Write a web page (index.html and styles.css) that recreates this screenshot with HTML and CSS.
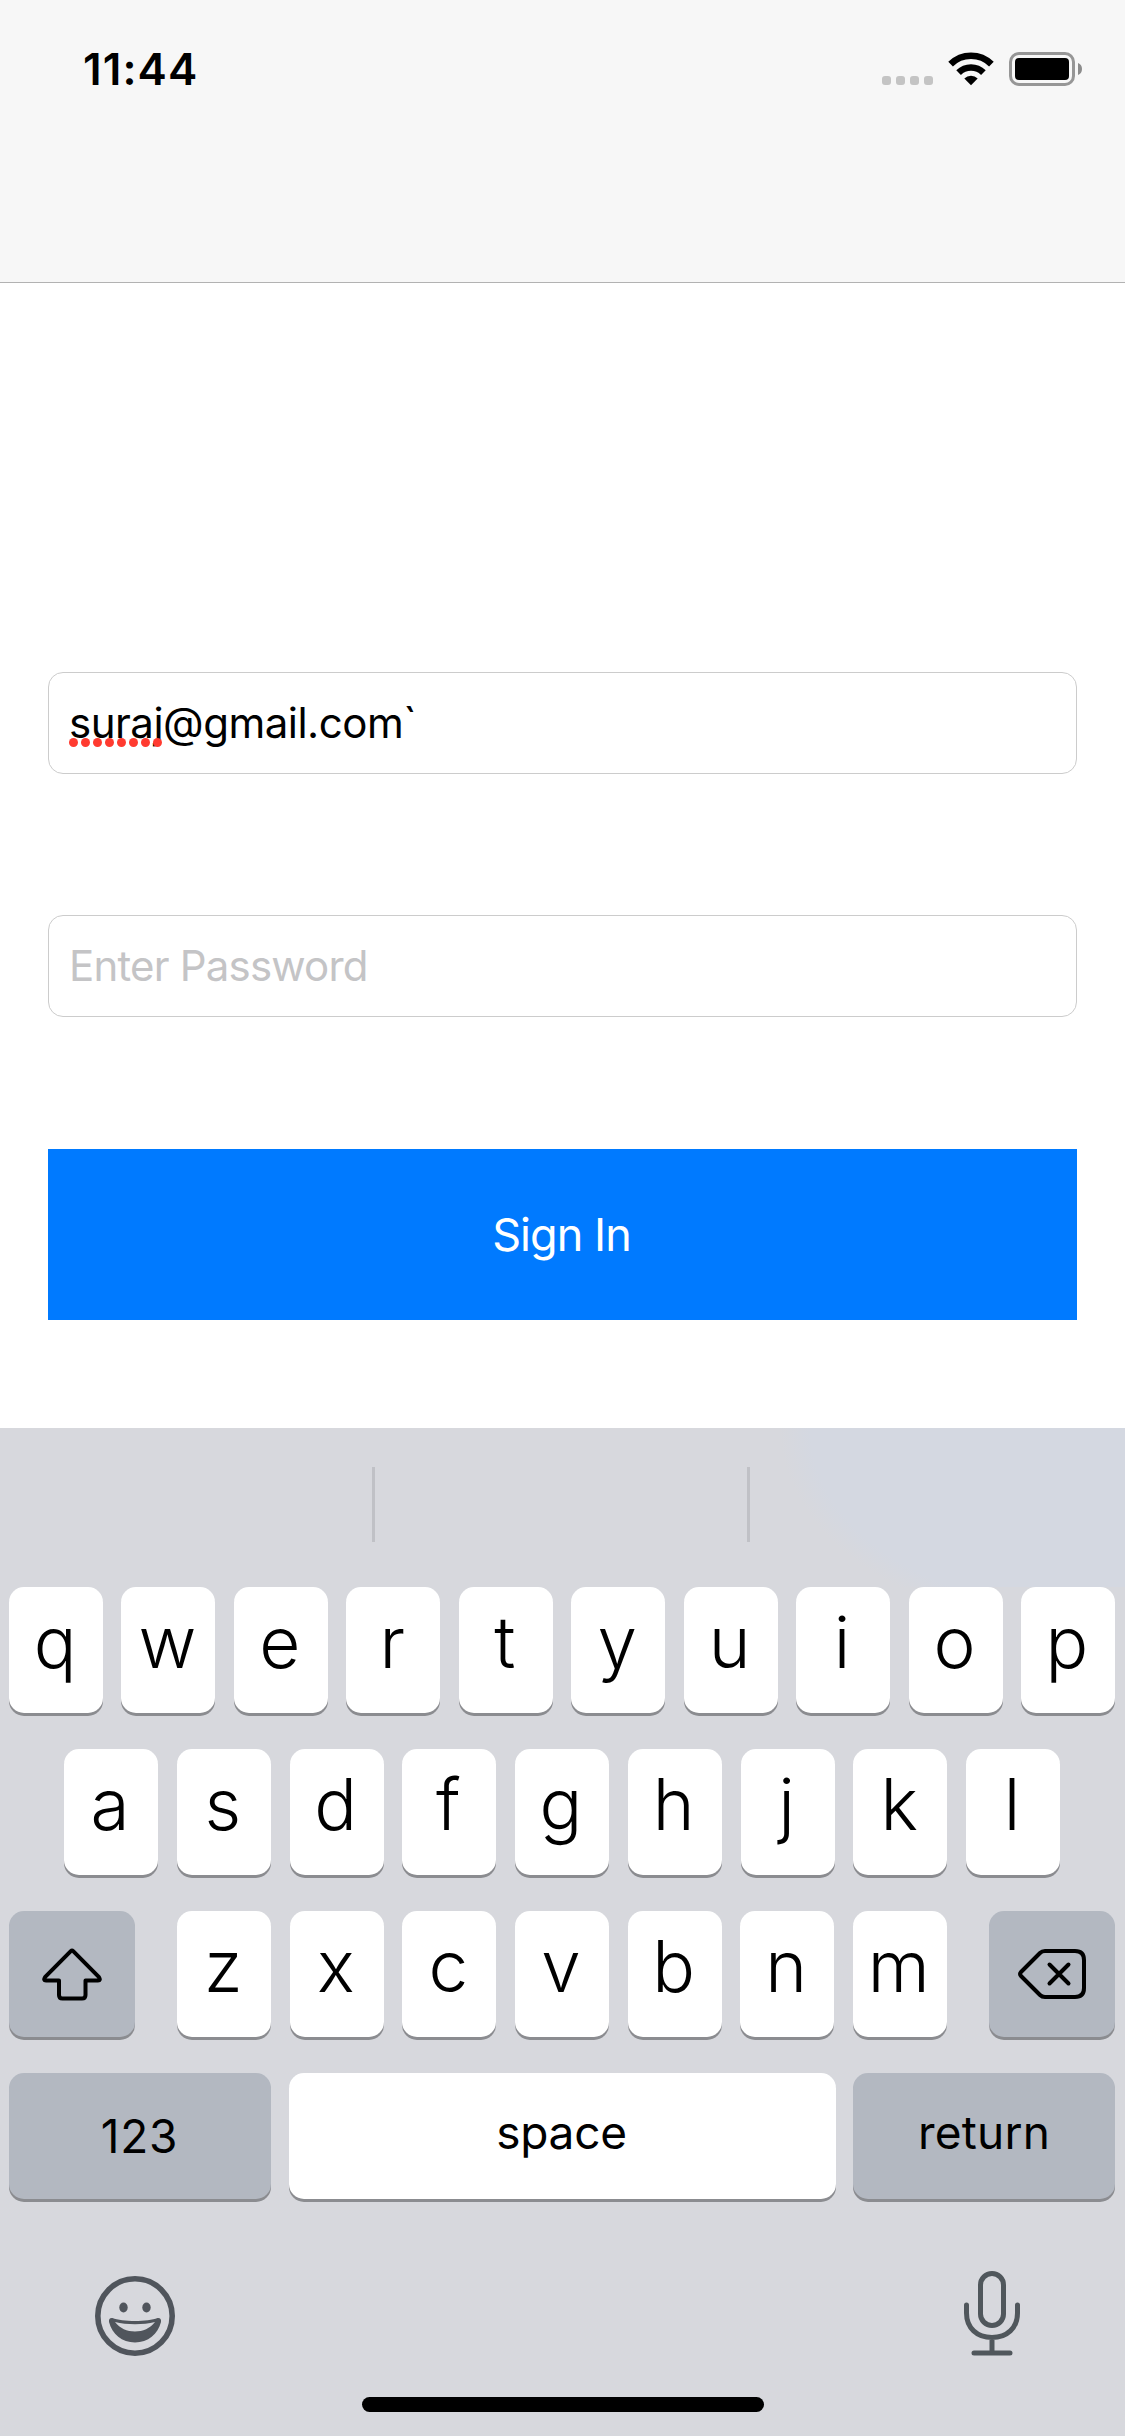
FILE: index.html
```html
<!DOCTYPE html>
<html lang="en">
<head>
<meta charset="utf-8">
<title>Sign In</title>
<link rel="stylesheet" href="styles.css">
</head>
<body>
<div class="screen">
  <header class="navbar">
    <span class="time">11:44</span>
    <div class="status">
      <svg class="signal" width="52" height="10" viewBox="0 0 52 10" fill="#c4c4c4"><rect width="9" height="9" rx="3"/><rect x="14" width="9" height="9" rx="3"/><rect x="28" width="9" height="9" rx="3"/><rect x="42" width="9" height="9" rx="3"/></svg>
      <svg class="wifi" width="46" height="34" viewBox="0 0 46 34"><path d="M2.6 12.2A29 29 0 0 1 43.4 12.2" fill="none" stroke="#000" stroke-width="6.6"/><path d="M10.6 20.6A17.6 17.6 0 0 1 35.4 20.6" fill="none" stroke="#000" stroke-width="6.6"/><path d="M16.3 26.5A9.5 9.5 0 0 1 29.7 26.5L23 33.2Z"/></svg>
      <svg class="battery" width="74" height="34" viewBox="0 0 74 34"><rect x="1.5" y="1.5" width="63" height="31" rx="8.5" fill="none" stroke="#969696" stroke-width="3"/><rect x="6" y="6" width="54" height="22" rx="4"/><path d="M69 11Q73 12.5 73 17T69 23Z" fill="#8c8c8c"/></svg>
    </div>
  </header>

  <main class="form">
    <div class="field"><span class="email"><span class="misspelled">suraj<svg class="dots" width="93" height="9" viewBox="0 0 93 9" fill="#ff3b30"><circle cx="4.5" cy="4.5" r="4.5"/><circle cx="16.5" cy="4.5" r="4.5"/><circle cx="28.5" cy="4.5" r="4.5"/><circle cx="40.5" cy="4.5" r="4.5"/><circle cx="52.5" cy="4.5" r="4.5"/><circle cx="64.5" cy="4.5" r="4.5"/><circle cx="76.5" cy="4.5" r="4.5"/><circle cx="88.5" cy="4.5" r="4.5"/></svg></span>@gmail.com`</span></div>
    <div class="field"><span class="placeholder">Enter Password</span></div>
    <div class="button">Sign In</div>
  </main>

  <section class="keyboard">
    <div class="suggestions"><span></span><span></span><span></span></div>
    <div class="row"><span class="key">q</span><span class="key">w</span><span class="key">e</span><span class="key">r</span><span class="key">t</span><span class="key">y</span><span class="key">u</span><span class="key">i</span><span class="key">o</span><span class="key">p</span></div>
    <div class="row row-middle"><span class="key">a</span><span class="key">s</span><span class="key">d</span><span class="key">f</span><span class="key">g</span><span class="key">h</span><span class="key">j</span><span class="key">k</span><span class="key">l</span></div>
    <div class="row">
      <span class="key modifier"><svg width="60" height="54" viewBox="0 0 60 54" fill="none" stroke="#000" stroke-width="4" stroke-linejoin="round"><path d="M28.8 4.2Q30 3 31.2 4.2L57 30.2Q59 33.5 56 33.5H43.500V48Q43.500 51.5 40 51.5H20.5Q17 51.5 17 48V33.5H4Q1 33.5 3 30.2Z"/></svg></span>
      <div class="letters"><span class="key">z</span><span class="key">x</span><span class="key">c</span><span class="key">v</span><span class="key">b</span><span class="key">n</span><span class="key">m</span></div>
      <span class="key modifier"><svg class="delete" width="70" height="52" viewBox="0 0 70 52" fill="none" stroke="#000" stroke-width="4" stroke-linecap="round" stroke-linejoin="round"><path d="M28 3H58Q67 3 67 12V40Q67 49 58 49H28Q25 49 23 47L4 28Q2 26 4 24L23 5Q25 3 28 3Z"/><path d="M32.5 16.5L51.5 35.5M51.5 16.5L32.5 35.5"/></svg></span>
    </div>
    <div class="row">
      <span class="key wide numbers">123</span>
      <span class="key space">space</span>
      <span class="key wide return">return</span>
    </div>
    <div class="tools">
      <svg width="80" height="80" viewBox="0 0 80 80"><circle cx="40" cy="40" r="37.2" fill="none" stroke="#50555c" stroke-width="5.6"/><ellipse cx="28.5" cy="31.5" rx="4.2" ry="5" fill="#50555c"/><ellipse cx="51.5" cy="31.5" rx="4.2" ry="5" fill="#50555c"/><path fill="#50555c" fill-rule="evenodd" d="M17.5 42C27 46 53 46 62.5 42Q66.5 41.5 66 46C63 58 53 66.5 40 66.5S17 58 14 46Q13.5 41.5 17.5 42ZM20 46C32 49 48 49 60 46C55 52.5 48 55.5 40 55.5S25 52.5 20 46Z"/></svg>
      <svg width="56" height="85" viewBox="0 0 56 85" fill="none" stroke="#50575c" stroke-width="5" stroke-linecap="round"><rect x="16.5" y="2.5" width="23" height="52" rx="11.5"/><path d="M2.5 34V42C2.5 57 13 66.5 28 66.5S53.5 57 53.5 42V34M28 67V81M10 82H46"/></svg>
    </div>
    <div class="home"></div>
  </section>
</div>
</body>
</html>
```
FILE: styles.css
```css
* { box-sizing: border-box; }
body { margin: 0; background: #fff; font-family: Inter, "Liberation Sans", sans-serif; color: #000; }
svg { display: block; }
.screen { width: 1125px; height: 2436px; display: flex; flex-direction: column; overflow: hidden; }

.navbar { height: 283px; flex: none; background: #f7f7f7; border-bottom: 1px solid #b2b2b2; display: flex; justify-content: space-between; padding: 52px 42px 0 83px; }
.time { font-size: 44px; line-height: 34px; font-weight: 600; letter-spacing: 1.1px; }
.status { display: flex; height: 34px; }
.signal { margin: 24px 14px 0 0; }
.wifi { margin-right: 15px; }

.form { height: 1145px; flex: none; padding: 389px 48px 0; }
.field { height: 102px; border: 1px solid #cccccc; border-radius: 15px; padding-left: 20px; margin-bottom: 141px; font-size: 42px; line-height: 100px; white-space: nowrap; }
.email { letter-spacing: -0.5px; }
.misspelled { position: relative; }
.dots { position: absolute; left: 0; top: 41px; }
.placeholder { color: #c4c4c6; letter-spacing: -0.8px; }
.button { height: 171px; margin-top: -9px; padding-right: 2px; background: #007aff; color: #fff; font-size: 45px; line-height: 171px; letter-spacing: -0.95px; text-align: center; }

.keyboard { height: 1008px; flex: none; background: #d7d8dd; display: flex; flex-direction: column; padding: 0 10px 0 9px; }
.suggestions { height: 159px; flex: none; margin: 0 -10px 0 -9px; padding: 39px 0 45px; display: grid; grid-template-columns: 375px 375px 375px; background: radial-gradient(ellipse 300px 200px at 1080px 0, #d4d8e1 90%, rgba(212,216,225,0) 100%); }
.suggestions span { border-right: 3px solid #c0c1c6; }
.suggestions span:last-child { border: 0; }
.row { display: flex; justify-content: space-between; height: 126px; flex: none; margin-bottom: 36px; }
.row-middle { padding: 0 55px; }
.letters { display: flex; gap: 18.6px; }
.key { width: 94px; height: 126px; padding-right: 2px; background: #fff; border-radius: 15px; box-shadow: 0 3px 0 #8b8c90; font-size: 71px; font-weight: 350; line-height: 110px; text-align: center; }
.modifier { width: 126px; padding-right: 0; background: #b3b8c1; display: flex; align-items: center; justify-content: center; }
.wide, .space { font-size: 46px; font-weight: 400; line-height: 119px; letter-spacing: -0.3px; padding-right: 1px; }
.wide { width: 262px; background: #b3b8c1; }
.numbers { line-height: 126px; letter-spacing: 0.8px; }
.return { letter-spacing: 0.2px; padding-right: 0; }
.space { width: 547px; }
.tools { display: flex; justify-content: space-between; padding: 0 95px 0 86px; height: 86px; margin-top: 35px; align-items: flex-end; }
.home { width: 402px; height: 15px; border-radius: 8px; background: #000; margin: 41px 0 0 353px; }
```
